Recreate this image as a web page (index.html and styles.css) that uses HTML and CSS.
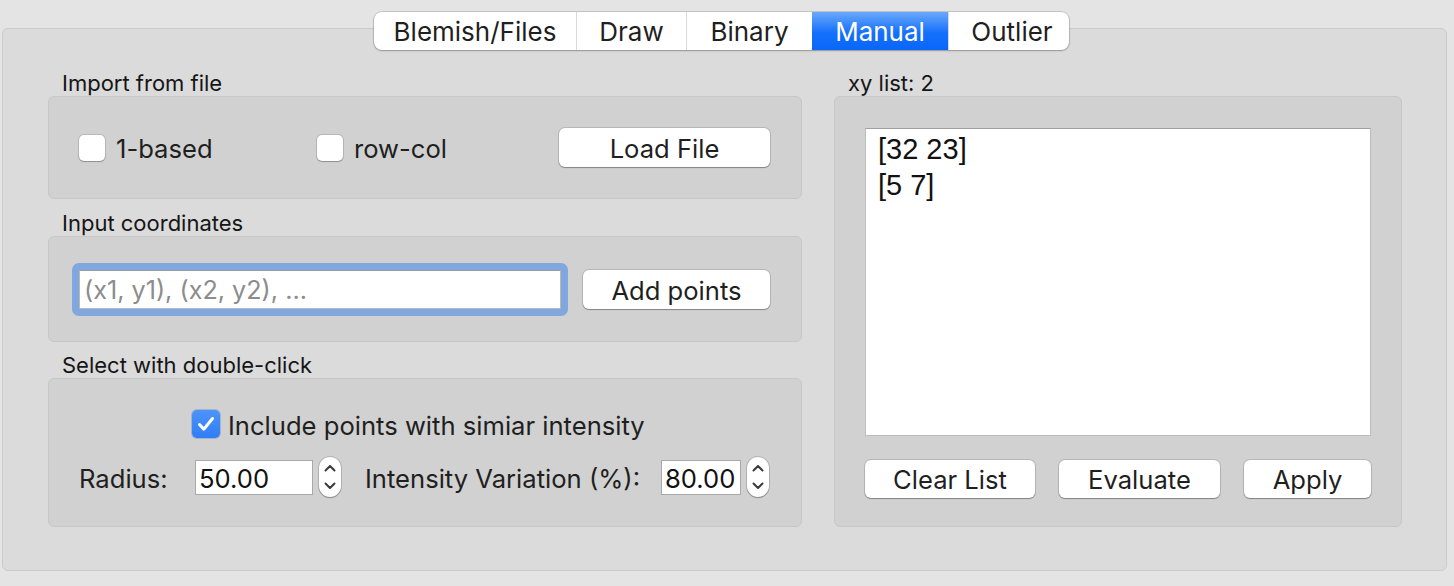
FILE: index.html
```html
<!DOCTYPE html>
<html>
<head>
<meta charset="utf-8">
<link rel="stylesheet" href="styles.css">
</head>
<body>
<div class="window">
  <div class="tabs">
    <div class="tab tab-blemish">Blemish/Files</div>
    <div class="tab tab-draw">Draw</div>
    <div class="tab tab-binary">Binary</div>
    <div class="tab tab-manual selected">Manual</div>
    <div class="tab tab-outlier">Outlier</div>
  </div>
  <div class="panel">
    <div class="col-left">
      <div class="group-label">Import from file</div>
      <div class="box box-import">
        <label class="check-item check-first"><span class="cb"></span><span>1-based</span></label>
        <label class="check-item"><span class="cb"></span><span>row-col</span></label>
        <div class="btn btn-load">Load File</div>
      </div>
      <div class="group-label label-2">Input coordinates</div>
      <div class="box box-input">
        <div class="focus-ring"><div class="text-input"><span class="placeholder">(x1, y1), (x2, y2), ...</span></div></div>
        <div class="btn btn-add">Add points</div>
      </div>
      <div class="group-label label-3">Select with double-click</div>
      <div class="box box-select">
        <div class="row-include">
          <span class="cb cb-checked"><svg width="28" height="28" viewBox="0 0 28 28"><polyline points="7.5,14.5 11.8,19.2 20.5,8.5" fill="none" stroke="#fff" stroke-width="3" stroke-linecap="round" stroke-linejoin="round"/></svg></span>
          <span>Include points with simiar intensity</span>
        </div>
        <div class="row-params">
          <span class="param-label label-radius">Radius:</span>
          <div class="num-input num-radius">50.00</div>
          <span class="stepper"><svg width="22" height="40" viewBox="0 0 22 40"><polyline points="6.5,13.5 11,9 15.5,13.5" fill="none" stroke="#3a3a3a" stroke-width="2" stroke-linecap="round" stroke-linejoin="round"/><polyline points="6.5,26.5 11,31 15.5,26.5" fill="none" stroke="#3a3a3a" stroke-width="2" stroke-linecap="round" stroke-linejoin="round"/></svg></span>
          <span class="param-label label-intensity">Intensity Variation (%):</span>
          <div class="num-input num-intensity">80.00</div>
          <span class="stepper"><svg width="22" height="40" viewBox="0 0 22 40"><polyline points="6.5,13.5 11,9 15.5,13.5" fill="none" stroke="#3a3a3a" stroke-width="2" stroke-linecap="round" stroke-linejoin="round"/><polyline points="6.5,26.5 11,31 15.5,26.5" fill="none" stroke="#3a3a3a" stroke-width="2" stroke-linecap="round" stroke-linejoin="round"/></svg></span>
        </div>
      </div>
    </div>
    <div class="col-right">
      <div class="group-label">xy list: 2</div>
      <div class="box box-list">
        <div class="list">
          <div class="list-item">[32 23]</div>
          <div class="list-item">[5 7]</div>
        </div>
        <div class="list-buttons">
          <div class="btn btn-clear">Clear List</div>
          <div class="btn btn-eval">Evaluate</div>
          <div class="btn btn-apply">Apply</div>
        </div>
      </div>
    </div>
  </div>
</div>
</body>
</html>
```
FILE: styles.css
```css
* { box-sizing: border-box; }
html, body { margin: 0; padding: 0; }
body {
  width: 1454px;
  height: 586px;
  overflow: hidden;
  background: #e4e4e4;
  font-family: Inter, "Noto Sans", sans-serif;
  color: #1f1f1f;
}
.window {
  height: 586px;
  padding: 12px 7px 15px 2px;
  display: flex;
  flex-direction: column;
}
.tabs {
  position: relative;
  z-index: 1;
  align-self: flex-start;
  margin-left: 372px;
  margin-bottom: -22px;
  height: 38px;
  display: flex;
  background: #fff;
  border-radius: 8px;
  overflow: hidden;
  box-shadow: 0 0 0 1px rgba(0,0,0,0.13), 0 1px 2px rgba(0,0,0,0.22);
}
.tab {
  height: 38px;
  line-height: 38px;
  padding-top: 1px;
  font-size: 26px;
  text-align: center;
  border-left: 1px solid #d9d9d9;
}
.tab-blemish { width: 202px; border-left: none; }
.tab-draw { width: 110px; }
.tab-binary { width: 126px; }
.tab-manual { width: 136px; }
.tab-outlier { width: 121px; padding-left: 6px; }
.tab.selected {
  color: #fff;
  border-left: none;
  background: linear-gradient(#6aa8fc, #1470fb 55%, #0a66fa);
}
.panel {
  flex: 1;
  background: #dbdbdb;
  border: 1px solid #cbcbcb;
  border-radius: 6px;
  padding: 41px 0 0 45px;
  display: flex;
  gap: 32px;
}
.col-left { width: 754px; display: flex; flex-direction: column; }
.col-right { width: 568px; display: flex; flex-direction: column; }
.group-label {
  height: 26px;
  line-height: 26px;
  font-size: 22px;
  padding-left: 14px;
  color: #151515;
}
.label-2 { margin-top: 11px; }
.label-3 { margin-top: 10px; }
.box {
  background: #d1d1d1;
  border: 1px solid #c7c7c7;
  border-radius: 6px;
}
.box-import {
  height: 103px;
  display: flex;
  align-items: center;
  padding: 0 31px 0 30px;
}
.check-item {
  display: flex;
  align-items: center;
  gap: 11px;
  font-size: 25.6px;
}
.check-item span:last-child { padding-top: 2px; }
.check-first { width: 238px; }
.cb {
  width: 26px;
  height: 26px;
  flex: none;
  background: #fff;
  border-radius: 5px;
  box-shadow: 0 0 0 1px rgba(0,0,0,0.12), 0 1px 1px rgba(0,0,0,0.22);
}
.btn {
  background: #fff;
  border-radius: 6px;
  box-shadow: 0 0 0 1px rgba(0,0,0,0.12), 0 1px 1px rgba(0,0,0,0.28);
  display: flex;
  align-items: center;
  justify-content: center;
  font-size: 25.6px;
  height: 39px;
  padding-top: 2px;
}
.btn-load { margin-left: auto; width: 211px; }
.box-input {
  height: 106px;
  display: flex;
  align-items: center;
  padding-left: 23px;
}
.focus-ring {
  padding: 7px;
  background: #80a8de;
  border-radius: 7px;
}
.text-input {
  width: 482px;
  height: 39px;
  background: #fff;
  border: 1px solid #b9b9b9;
  border-top-color: #9c9c9c;
  display: flex;
  align-items: center;
  padding: 2px 0 0 4px;
}
.placeholder { font-size: 25.2px; color: #8c8c8c; }
.btn-add { margin-left: 15px; width: 187px; }
.box-select {
  height: 149px;
  padding-top: 31px;
}
.row-include {
  height: 28px;
  display: flex;
  align-items: center;
  gap: 8px;
  padding-left: 143px;
  font-size: 25.6px;
}
.row-include span:last-child { padding-top: 2px; }
.cb-checked {
  width: 28px;
  height: 28px;
  background: linear-gradient(#4d94f9, #2f7df6);
  box-shadow: 0 0 0 1px rgba(30,90,200,0.25);
  display: flex;
}
.row-params {
  margin-top: 19px;
  height: 40px;
  display: flex;
  align-items: center;
  padding-left: 30px;
  font-size: 25.6px;
}
.param-label { padding-top: 2px; }
.label-radius { width: 116px; }
.label-intensity { width: 296px; margin-left: 24px; }
.num-input {
  height: 35px;
  background: #fff;
  border: 1px solid #a9a9a9;
  font-size: 25.6px;
  line-height: 35px;
  padding-left: 3px;
  color: #111;
}
.num-radius { width: 118px; }
.num-intensity { width: 80px; }
.stepper {
  margin-left: 6px;
  width: 22px;
  height: 40px;
  background: #fff;
  border-radius: 11px;
  box-shadow: 0 0 0 1px rgba(0,0,0,0.14), 0 1px 1px rgba(0,0,0,0.25);
  display: flex;
}
.box-list {
  height: 431px;
  padding: 31px 30px 0 30px;
}
.list {
  height: 308px;
  background: #fff;
  border: 1px solid #bdbdbd;
  border-top-color: #a0a0a0;
  padding: 2px 12px;
  font-family: "Liberation Sans", Arial, sans-serif;
  font-size: 29px;
  line-height: 36px;
  color: #111;
}
.list-buttons {
  margin-top: 24px;
  display: flex;
  justify-content: space-between;
}
.list-buttons .btn { height: 38px; padding-top: 0; }
.btn-clear { width: 170px; }
.btn-eval { width: 161px; }
.btn-apply { width: 127px; }
```
